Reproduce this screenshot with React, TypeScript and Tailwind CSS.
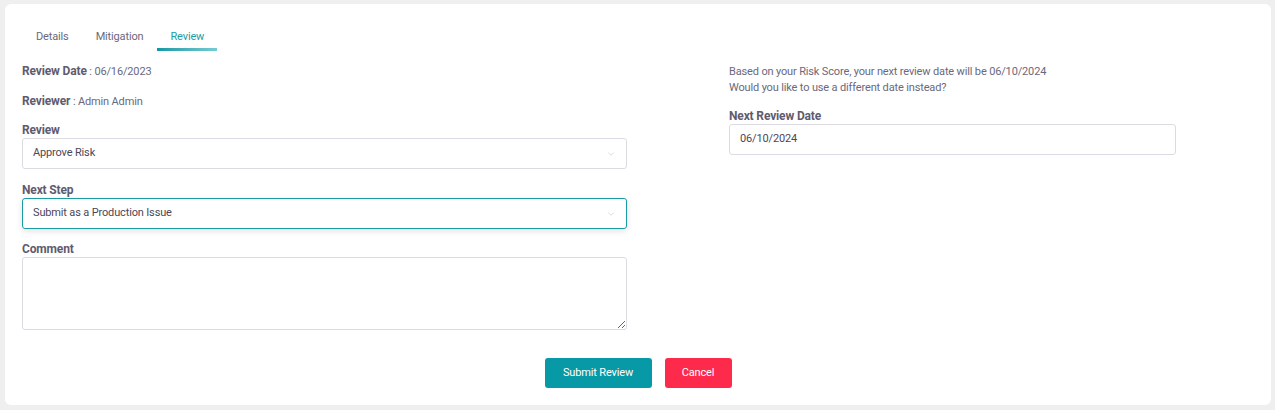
import { ChevronDown } from "lucide-react";

const font = { fontFamily: "Roboto, 'Liberation Sans', sans-serif" };

function Label({ children }: { children: React.ReactNode }) {
  return <div className="text-[12px] font-bold text-[#5f5b6e] leading-[14px] mb-[1px]">{children}</div>;
}

export default function App() {
  return (
    <div className="w-[1275px] h-[410px] bg-[#efefef] pt-[4px] pl-[5px]" style={font}>
      <div className="w-[1266px] h-[401px] bg-white rounded-[6px] pt-[24px] px-[17px] tracking-[-0.15px]">
        {/* tabs */}
        <div className="flex text-[11px] text-[#6b687c] leading-[16px] h-[23px]">
          <div className="pl-[14px] pr-[14px] pt-[1px]">Details</div>
          <div className="pl-[13px] pr-[14px] pt-[1px]">Mitigation</div>
          <div className="relative px-[13px] pt-[1px] text-[#1a9ca6]">
            Review
            <div className="absolute left-0 right-0 bottom-0 h-[3px] bg-gradient-to-r from-[#0b98a4] to-[#74ccd3]" />
          </div>
        </div>

        <div className="flex mt-[13px]">
          {/* left column */}
          <div className="w-[605px]">
            <div className="text-[11px] text-[#6b687c] leading-[14px]">
              <span className="text-[12px] font-bold text-[#5f5b6e]">Review Date</span> : 06/16/2023
            </div>
            <div className="text-[11px] text-[#6b687c] leading-[14px] mt-[15px]">
              <span className="text-[12px] font-bold text-[#5f5b6e]">Reviewer</span> : Admin Admin
            </div>

            <div className="mt-[14px]">
              <Label>Review</Label>
              <div className="h-[31px] border border-[#dcdbe3] rounded-[3px] flex items-center justify-between px-[10px] text-[11px] text-[#4a4858]">
                <span>Approve Risk</span>
                <ChevronDown className="w-[10px] h-[10px] text-[#c5c4cc]" strokeWidth={1.5} />
              </div>
            </div>

            <div className="mt-[14px]">
              <Label>Next Step</Label>
              <div className="h-[31px] border border-[#1a9aa5] rounded-[3px] flex items-center justify-between px-[10px] text-[11px] text-[#4a4858] shadow-[0_2px_6px_rgba(0,0,0,0.12)]">
                <span>Submit as a Production Issue</span>
                <ChevronDown className="w-[10px] h-[10px] text-[#c5c4cc]" strokeWidth={1.5} />
              </div>
            </div>

            <div className="mt-[13px]">
              <Label>Comment</Label>
              <textarea className="block w-full h-[73px] border border-[#dcdbe3] rounded-[3px] resize-y outline-none" />
            </div>
          </div>

          {/* right column */}
          <div className="ml-[102px] w-[447px]">
            <div className="text-[11px] text-[#6b687c] leading-[16px]">
              <div>Based on your Risk Score, your next review date will be 06/10/2024</div>
              <div>Would you like to use a different date instead?</div>
            </div>
            <div className="mt-[13px]">
              <Label>Next Review Date</Label>
              <div className="h-[31px] border border-[#dcdbe3] rounded-[3px] flex items-center px-[10px] text-[11px] text-[#4a4858]">
                06/10/2024
              </div>
            </div>
          </div>
        </div>

        <div className="flex justify-center gap-[13px] mt-[28px]">
          <button className="w-[107px] h-[30px] rounded-[3px] bg-[#0799a6] text-white text-[11px]">Submit Review</button>
          <button className="w-[67px] h-[30px] rounded-[3px] bg-[#fd2a4b] text-white text-[11px]">Cancel</button>
        </div>
      </div>
    </div>
  );
}
